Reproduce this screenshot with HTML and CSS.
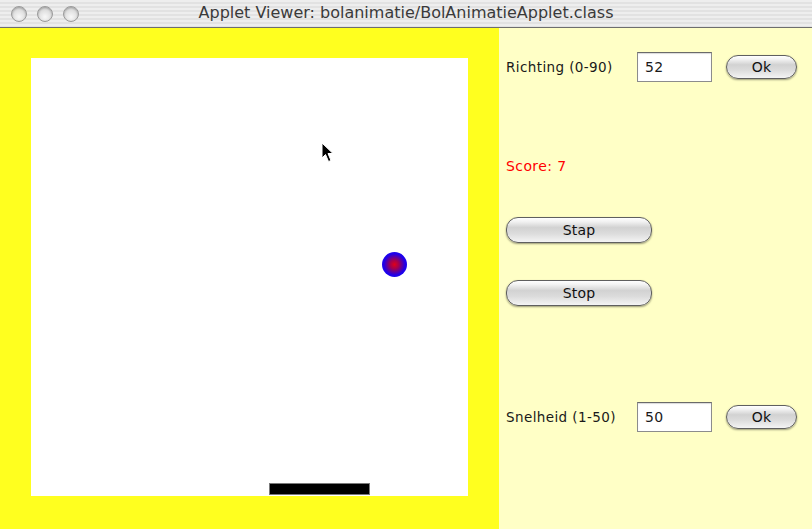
FILE: index.html
```html
<!DOCTYPE html>
<html>
<head>
<meta charset="utf-8">
<link rel="stylesheet" href="styles.css">
</head>
<body>
<div class="window">
  <div class="titlebar">
    <div class="lights">
      <span class="light"></span><span class="light"></span><span class="light"></span>
    </div>
    <div class="title">Applet Viewer: bolanimatie/BolAnimatieApplet.class</div>
  </div>
  <div class="content">
    <div class="left">
      <div class="canvas">
        <div class="ball"></div>
        <div class="paddle"></div>
        <svg class="cursor" width="14" height="22" viewBox="0 0 14 22">
          <path d="M1 1 L1 16 L4.5 12.5 L7.5 19.5 L10 18.5 L7 11.5 L12 11.5 Z" fill="#000" stroke="#fff" stroke-width="1"/>
        </svg>
      </div>
    </div>
    <div class="right">
      <div class="row row-top">
        <span class="label">Richting (0-90)</span>
        <span class="field">52</span>
        <span class="btn btn-ok">Ok</span>
      </div>
      <div class="score">Score: 7</div>
      <div class="btn btn-wide btn-stap">Stap</div>
      <div class="btn btn-wide btn-stop">Stop</div>
      <div class="row row-bottom">
        <span class="label">Snelheid (1-50)</span>
        <span class="field">50</span>
        <span class="btn btn-ok">Ok</span>
      </div>
    </div>
  </div>
</div>
</body>
</html>
```
FILE: styles.css
```css
html, body {
  margin: 0;
  padding: 0;
  background: #ffffc6;
}
.window {
  width: 812px;
  height: 529px;
  display: flex;
  flex-direction: column;
  font-family: "DejaVu Sans", "Liberation Sans", sans-serif;
}
.titlebar {
  height: 27px;
  border-bottom: 1px solid #6e6e6e;
  background: repeating-linear-gradient(to bottom, #eeeeee 0px, #eeeeee 2px, #e2e2e2 2px, #e2e2e2 4px);
  display: flex;
  align-items: center;
  position: relative;
}
.lights {
  display: flex;
  gap: 10px;
  padding-left: 11px;
}
.light {
  width: 14px;
  height: 14px;
  border-radius: 50%;
  border: 1px solid #9a9a9a;
  background: radial-gradient(circle at 50% 70%, #f8f8f8 0%, #dcdcdc 60%, #c4c4c4 100%);
  box-shadow: inset 0 1px 2px rgba(0,0,0,0.25);
}
.title {
  position: absolute;
  left: 0;
  right: 0;
  top: 3px;
  text-align: center;
  font-size: 16px;
  color: #3a3a3a;
}
.content {
  flex: 1;
  display: flex;
}
.left {
  width: 499px;
  background: #ffff1f;
  padding: 30px 0 0 31px;
  box-sizing: border-box;
}
.canvas {
  width: 437px;
  height: 438px;
  background: #ffffff;
  position: relative;
}
.ball {
  position: absolute;
  left: 351px;
  top: 194px;
  width: 25px;
  height: 25px;
  border-radius: 50%;
  background: radial-gradient(circle, #e00018 0%, #a00050 25%, #2000e8 60%, #1010ff 100%);
}
.paddle {
  position: absolute;
  left: 238px;
  top: 425px;
  width: 99px;
  height: 10px;
  background: #000;
  border: 1px solid #7a7a7a;
}
.cursor {
  position: absolute;
  left: 290px;
  top: 84px;
}
.right {
  flex: 1;
  background: #ffffc6;
  display: flex;
  flex-direction: column;
  padding: 24px 0 0 7px;
  font-size: 13.5px;
  letter-spacing: 0.4px;
  color: #1a1a1a;
}
.row {
  display: flex;
  align-items: center;
  height: 30px;
}
.label {
  width: 131px;
  white-space: nowrap;
}
.field {
  width: 66px;
  height: 28px;
  border: 1px solid #8c8c8c;
  border-top-color: #6a6a6a;
  background: #fff;
  box-sizing: content-box;
  padding-left: 7px;
  display: flex;
  align-items: center;
  font-size: 14px;
  box-shadow: inset 0 1px 1px rgba(0,0,0,0.15);
}
.btn {
  display: flex;
  align-items: center;
  justify-content: center;
  box-sizing: border-box;
  border: 1px solid #5f5f5f;
  border-radius: 12px;
  background: linear-gradient(to bottom, #ffffff 0%, #f2f2f2 15%, #d2d2d2 40%, #dcdcdc 65%, #f4f4f4 100%);
  box-shadow: 0 1px 2px rgba(0,0,0,0.4);
  font-size: 14px;
  letter-spacing: 0.2px;
  color: #111;
}
.btn-ok {
  margin-left: 14px;
  width: 71px;
  height: 24px;
}
.score {
  color: #ff0000;
  margin-top: 76px;
  font-size: 14px;
  height: 18px;
}
.btn-wide {
  width: 146px;
  height: 26px;
}
.btn-stap {
  margin-top: 41px;
}
.btn-stop {
  margin-top: 37px;
}
.row-bottom {
  margin-top: 96px;
}
```
